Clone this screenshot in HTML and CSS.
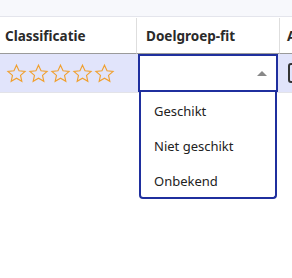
FILE: index.html
```html
<!DOCTYPE html>
<html>
<head>
<meta charset="utf-8">
<link rel="stylesheet" href="styles.css">
</head>
<body>
<div class="topbar"></div>
<div class="grid">
  <div class="hcell c1">Classificatie</div>
  <div class="hcell c2">Doelgroep-fit</div>
  <div class="hcell c3">A</div>
  <div class="dcell c1">
    <div class="stars">
      <svg class="star" viewBox="0 0 24 24"><path d="M12 2.5l2.9 6.3 6.9.7-5.2 4.6 1.5 6.8L12 17.4l-6.1 3.5 1.5-6.8-5.2-4.6 6.9-.7z"/></svg>
      <svg class="star" viewBox="0 0 24 24"><path d="M12 2.5l2.9 6.3 6.9.7-5.2 4.6 1.5 6.8L12 17.4l-6.1 3.5 1.5-6.8-5.2-4.6 6.9-.7z"/></svg>
      <svg class="star" viewBox="0 0 24 24"><path d="M12 2.5l2.9 6.3 6.9.7-5.2 4.6 1.5 6.8L12 17.4l-6.1 3.5 1.5-6.8-5.2-4.6 6.9-.7z"/></svg>
      <svg class="star" viewBox="0 0 24 24"><path d="M12 2.5l2.9 6.3 6.9.7-5.2 4.6 1.5 6.8L12 17.4l-6.1 3.5 1.5-6.8-5.2-4.6 6.9-.7z"/></svg>
      <svg class="star" viewBox="0 0 24 24"><path d="M12 2.5l2.9 6.3 6.9.7-5.2 4.6 1.5 6.8L12 17.4l-6.1 3.5 1.5-6.8-5.2-4.6 6.9-.7z"/></svg>
    </div>
  </div>
  <div class="dcell c2 selcell">
    <div class="select">
      <span class="caret"></span>
    </div>
    <ul class="menu">
      <li>Geschikt</li>
      <li>Niet geschikt</li>
      <li>Onbekend</li>
    </ul>
  </div>
  <div class="dcell c3"><span class="checkbox"></span></div>
</div>
</body>
</html>
```
FILE: styles.css
```css
html, body {
  margin: 0;
  padding: 0;
  background: #ffffff;
  font-family: "Noto Sans", "Open Sans", sans-serif;
  color: #222222;
}
body {
  min-height: 278px;
}
.topbar {
  height: 16px;
  background: #f7f8fc;
  border-bottom: 1px solid #e4e5ec;
}
.grid {
  display: grid;
  grid-template-columns: 137px 143px 1fr;
  margin-top: 1px;
}
.hcell {
  height: 36px;
  box-sizing: border-box;
  display: flex;
  align-items: center;
  padding-left: 5px;
  font-weight: 700;
  font-size: 13.5px;
  color: #2a2a2a;
  border-bottom: 1px solid #9a9a9a;
  border-right: 1px solid #dedede;
  white-space: nowrap;
  overflow: hidden;
}
.hcell.c2 { padding-left: 9px; }
.hcell.c3 { padding-left: 7px; border-right: none; }
.dcell {
  height: 39px;
  box-sizing: border-box;
  background: #e1e4fb;
  border-bottom: 1px solid #e3e3e8;
  display: flex;
  align-items: center;
}
.c1.dcell { padding-left: 6px; }
.stars {
  display: flex;
  gap: 1px;
}
.star {
  width: 21px;
  height: 21px;
  fill: none;
  stroke: #f0a030;
  stroke-width: 1.3;
  stroke-linejoin: miter;
}
.selcell {
  position: relative;
  padding: 0;
  align-items: stretch;
  background: #e1e4fb;
  z-index: 2;
}
.select {
  flex: 1;
  margin: 0 2px 0 1px;
  box-sizing: border-box;
  background: #ffffff;
  border: 2px solid #1f2f9e;
  position: relative;
}
.caret {
  position: absolute;
  right: 9px;
  top: 15px;
  width: 0;
  height: 0;
  border-left: 5px solid transparent;
  border-right: 5px solid transparent;
  border-bottom: 5px solid #888888;
}
.menu {
  position: absolute;
  left: 2px;
  right: 3px;
  top: 38px;
  margin: 0;
  list-style: none;
  background: #ffffff;
  border: 2px solid #1f2f9e;
  border-top: none;
  border-radius: 0 0 4px 4px;
  height: 107px;
  box-sizing: border-box;
  padding: 2px 0 0 0;
  z-index: 5;
}
.menu li {
  height: 35px;
  line-height: 35px;
  padding-left: 13px;
  font-size: 13px;
  color: #222222;
}
.c3.dcell { padding-left: 8px; }
.checkbox {
  width: 14px;
  height: 20px;
  border: 2px solid #333333;
  border-radius: 3px;
  box-sizing: border-box;
}
```
